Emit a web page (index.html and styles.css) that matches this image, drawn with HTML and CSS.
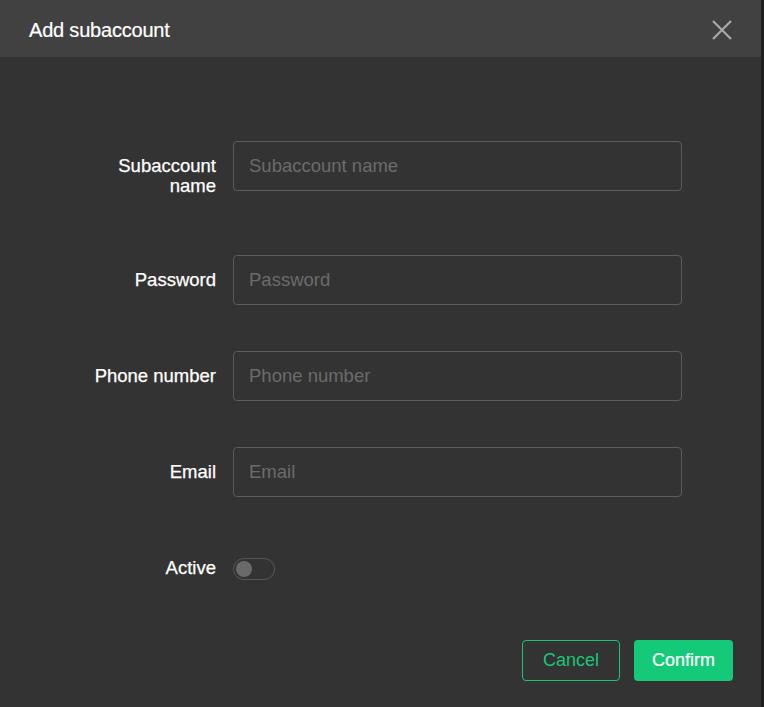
FILE: index.html
```html
<!DOCTYPE html>
<html lang="en">
<head>
    <meta charset="UTF-8">
    <meta name="viewport" content="width=device-width, initial-scale=1.0">
    <title>Add subaccount</title>
    <link rel="stylesheet" href="styles.css">
</head>
<body>
    <div class="dialog">
        <div class="dialog-header">
            <span class="dialog-title">Add subaccount</span>
            <button class="close-button" aria-label="Close">
                <svg width="22" height="22" viewBox="0 0 22 22">
                    <path d="M2 2 L20 20 M20 2 L2 20" stroke="#a9a9a9" stroke-width="2.2" fill="none"/>
                </svg>
            </button>
        </div>

        <div class="dialog-body">
            <!-- name -->
            <div class="form-row first">
                <label class="form-label">Subaccount name</label>
                <input class="form-input" type="text" placeholder="Subaccount name">
            </div>

            <!-- password -->
            <div class="form-row">
                <label class="form-label">Password</label>
                <input class="form-input" type="password" placeholder="Password">
            </div>

            <!-- phone -->
            <div class="form-row">
                <label class="form-label">Phone number</label>
                <input class="form-input" type="text" placeholder="Phone number">
            </div>

            <!-- email -->
            <div class="form-row">
                <label class="form-label">Email</label>
                <input class="form-input" type="text" placeholder="Email">
            </div>

            <!-- active -->
            <div class="form-row switch-row">
                <label class="form-label">Active</label>
                <span class="switch"><span class="switch-knob"></span></span>
            </div>
        </div>

        <div class="dialog-footer">
            <button class="btn btn-cancel">Cancel</button>
            <button class="btn btn-confirm">Confirm</button>
        </div>
    </div>
</body>
</html>
```

FILE: styles.css
```css
body {
    margin: 0;
    background-color: #333333;
    font-family: "Liberation Sans", Arial, sans-serif;
}
.dialog {
    height: 707px;
    display: flex;
    flex-direction: column;
    border-right: 3px solid #1f1f1f;
    box-sizing: border-box;
}
.dialog-header {
    height: 57px;
    box-sizing: border-box;
    background-color: #414141;
    display: flex;
    align-items: center;
    justify-content: space-between;
    padding: 3px 28px 0 29px;
}
.dialog-title {
    color: #ffffff;
    font-size: 20px;
    letter-spacing: -0.2px;
    -webkit-text-stroke: 0.2px #ffffff;
}
.close-button {
    background: none;
    border: none;
    padding: 0;
    width: 22px;
    height: 22px;
    cursor: pointer;
}
.dialog-body {
    padding-top: 84px;
}
.form-row {
    display: flex;
    align-items: flex-start;
    margin-bottom: 46px;
}
.form-row.first {
    margin-bottom: 59px;
}
.form-label {
    width: 130px;
    margin-left: 86px;
    padding-right: 17px;
    padding-top: 15px;
    text-align: right;
    color: #ffffff;
    font-size: 18.5px;
    line-height: 20px;
    -webkit-text-stroke: 0.25px #ffffff;
}
.form-input {
    width: 449px;
    height: 50px;
    box-sizing: border-box;
    background-color: #333333;
    border: 1.5px solid #5c5c5c;
    border-radius: 4px;
    padding: 0 15px;
    font-family: "Liberation Sans", Arial, sans-serif;
    font-size: 18.5px;
    color: #ffffff;
    outline: none;
}
.form-input::placeholder {
    color: #6b6b6b;
}
.switch-row {
    height: 50px;
}
.switch {
    margin-top: 15px;
    width: 42px;
    height: 22px;
    box-sizing: border-box;
    border: 1.5px solid #575757;
    border-radius: 11px;
    display: flex;
    align-items: center;
    padding-left: 2px;
}
.switch-knob {
    width: 16px;
    height: 16px;
    border-radius: 50%;
    background-color: #6a6a6a;
}
.dialog-footer {
    display: flex;
    justify-content: flex-end;
    gap: 14px;
    padding-right: 28px;
    margin-top: 1px;
}
.btn {
    height: 41px;
    width: 98px;
    border-radius: 4px;
    font-family: "Liberation Sans", Arial, sans-serif;
    font-size: 18px;
    cursor: pointer;
}
.btn-cancel {
    background-color: transparent;
    border: 1.5px solid #17c777;
    color: #17c777;
}
.btn-confirm {
    width: 99px;
    background-color: #14c978;
    border: none;
    color: #ffffff;
    -webkit-text-stroke: 0.2px #ffffff;
}
```
